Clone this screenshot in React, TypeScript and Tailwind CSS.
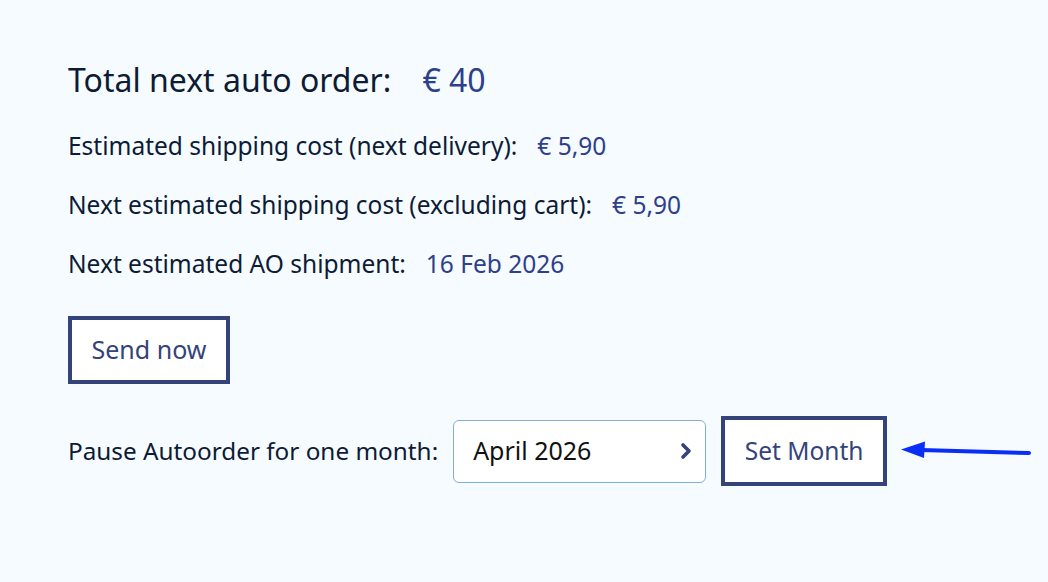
import React from 'react'

function Row({ label, value }: { label: string; value: string }) {
  return (
    <div className="flex h-[59px] items-center gap-[20px] text-[24.5px]">
      <span className="text-[#0d1b34]">{label}</span>
      <span className="text-[#2e3f8c]">{value}</span>
    </div>
  )
}

export default function App() {
  return (
    <div
      className="min-h-[582px] w-full bg-[#f5fbff] pl-[68px] pt-[57px]"
      style={{ fontFamily: '"Noto Sans", sans-serif' }}
    >
      <div className="flex h-[46px] items-center gap-[31px] text-[32px]">
        <span className="text-[#0d1b34]">Total next auto order:</span>
        <span className="text-[#2e3f8c]">€ 40</span>
      </div>

      <div className="mt-[14px] flex flex-col">
        <Row label="Estimated shipping cost (next delivery):" value="€ 5,90" />
        <Row label="Next estimated shipping cost (excluding cart):" value="€ 5,90" />
        <Row label="Next estimated AO shipment:" value="16 Feb 2026" />
      </div>

      <button className="mt-[22px] flex h-[68px] w-[162px] items-center justify-center border-[4px] border-[#34437a] bg-white text-[25px] text-[#34437a]">
        Send now
      </button>

      <div className="mt-[32px] flex items-center">
        <span className="text-[24.3px] text-[#0d1b34]">Pause Autoorder for one month:</span>
        <div className="ml-[15px] flex h-[63px] w-[253px] items-center justify-between rounded-[6px] border border-[#7fb0db] bg-white pl-[19px] pr-[12px] text-[25px] text-[#111]">
          <span>April 2026</span>
          <svg width="14" height="18" viewBox="0 0 14 18" fill="none">
            <path d="M4 3 L10 9 L4 15" stroke="#34437a" strokeWidth="3.6" strokeLinecap="round" strokeLinejoin="round" />
          </svg>
        </div>
        <button className="ml-[15px] flex h-[70px] w-[166px] items-center justify-center border-[4px] border-[#34437a] bg-white text-[24.5px] text-[#34437a]">
          Set Month
        </button>
        <svg className="ml-[14px]" width="130" height="20" viewBox="0 0 130 20">
          <line x1="20" y1="9" x2="128" y2="12" stroke="#0a2ef5" strokeWidth="4" strokeLinecap="round" />
          <path d="M0 8.5 L24 0.5 L23 17 Z" fill="#0a2ef5" />
        </svg>
      </div>
    </div>
  )
}
